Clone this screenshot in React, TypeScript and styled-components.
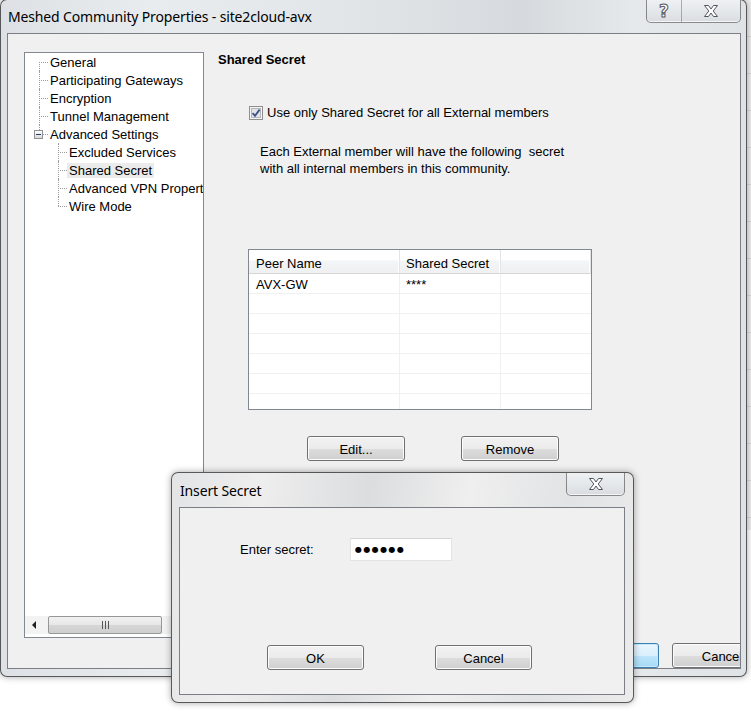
import styled, { createGlobalStyle } from "styled-components";

const GlobalStyle = createGlobalStyle`
  html, body {
    margin: 0;
    padding: 0;
    background: #ffffff;
  }
  body {
    font-family: "Liberation Sans", Arial, sans-serif;
    font-size: 13px;
    color: #000000;
  }
`;

const Desktop = styled.div`
  position: relative;
  width: 751px;
  height: 711px;
  overflow: hidden;
  background: #ffffff;
`;

const BehindStrip = styled.div`
  position: absolute;
  right: 0;
  top: 0;
  width: 14px;
  height: 530px;
  background: repeating-linear-gradient(180deg, #efefef 0 36px, #d8d8d8 36px 37px);
`;

const Window = styled.div<{ $left: number; $top: number; $width: number; $height: number; $glass: string }>`
  position: absolute;
  left: ${(p) => p.$left}px;
  top: ${(p) => p.$top}px;
  width: ${(p) => p.$width}px;
  height: ${(p) => p.$height}px;
  box-sizing: border-box;
  border: 1px solid rgba(40, 40, 40, 0.75);
  border-radius: 7px;
  background: ${(p) => p.$glass};
  box-shadow: 0 0 7px rgba(0, 0, 0, 0.35);
  display: flex;
  flex-direction: column;
`;

const TitleBar = styled.div<{ $height: number; $gap: number }>`
  height: ${(p) => p.$height}px;
  flex-shrink: 0;
  display: flex;
  align-items: flex-start;
  padding-left: ${(p) => p.$gap}px;
`;

const TitleText = styled.div<{ $top: number }>`
  padding-top: ${(p) => p.$top}px;
  font-family: "Noto Sans", "Open Sans", sans-serif;
  font-size: 14px;
  line-height: 18px;
  color: #000000;
  letter-spacing: -0.15px;
`;

const CaptionGroup = styled.div<{ $right: number }>`
  margin-left: auto;
  margin-right: ${(p) => p.$right}px;
  display: flex;
  border: 1px solid rgba(70, 70, 70, 0.6);
  border-top: none;
  border-radius: 0 0 5px 5px;
  overflow: hidden;
  background: linear-gradient(180deg, #eef0f2 0%, #e4e7ea 55%, #d8dce0 100%);
  box-shadow: inset 0 -1px 0 rgba(255, 255, 255, 0.7);
`;

const CaptionButton = styled.div<{ $width: number }>`
  width: ${(p) => p.$width}px;
  height: 22px;
  display: flex;
  align-items: center;
  justify-content: center;
  & + & {
    border-left: 1px solid rgba(90, 90, 90, 0.45);
  }
`;

const HelpGlyph = styled.span`
  font-family: "DejaVu Sans", sans-serif;
  font-weight: bold;
  font-size: 17px;
  line-height: 17px;
  color: #ffffff;
  -webkit-text-stroke: 1px #4f5560;
`;

const Client = styled.div<{ $margins: string }>`
  margin: ${(p) => p.$margins};
  flex: 1;
  border: 1px solid #7b7f85;
  background: #f0f0f0;
  overflow: hidden;
  display: flex;
  flex-direction: column;
`;

const BodyRow = styled.div`
  display: flex;
  padding: 18px 0 0 16px;
`;

const TreeBox = styled.div`
  width: 180px;
  height: 586px;
  flex-shrink: 0;
  box-sizing: border-box;
  border: 1px solid #828790;
  background: #ffffff;
  overflow: hidden;
  display: flex;
  flex-direction: column;
`;

const TreeRow = styled.div<{ $level: number }>`
  position: relative;
  height: 18px;
  box-sizing: border-box;
  padding-top: 2px;
  display: flex;
  align-items: flex-start;
  padding-left: ${(p) => 23 + p.$level * 19}px;
  white-space: nowrap;
`;

const TreeLabel = styled.span<{ $selected?: boolean }>`
  padding: 0 2px;
  line-height: 15px;
  background: ${(p) => (p.$selected ? "#ebebeb" : "transparent")};
`;

const VLine = styled.span<{ $level: number; $up: boolean; $down: boolean }>`
  position: absolute;
  left: ${(p) => 14 + p.$level * 19}px;
  top: ${(p) => (p.$up ? 0 : 9)}px;
  bottom: ${(p) => (p.$down ? 0 : 9)}px;
  border-left: 1px dotted #9c9c9c;
`;

const HLine = styled.span<{ $level: number }>`
  position: absolute;
  left: ${(p) => 14 + p.$level * 19}px;
  top: 9px;
  width: 9px;
  border-top: 1px dotted #9c9c9c;
`;

const Expander = styled.span`
  position: absolute;
  left: 9px;
  top: 5px;
  width: 9px;
  height: 9px;
  box-sizing: border-box;
  border: 1px solid #919191;
  background: linear-gradient(180deg, #ffffff, #d9d9d9);
  display: flex;
  align-items: center;
  justify-content: center;
  &::after {
    content: "";
    width: 5px;
    height: 1px;
    background: #233d6b;
  }
`;

const HScroll = styled.div`
  margin-top: auto;
  margin-bottom: 3px;
  height: 18px;
  display: flex;
  align-items: stretch;
  background: #f3f3f3;
`;

const ArrowButton = styled.div`
  width: 17px;
  display: flex;
  align-items: center;
  justify-content: center;
  &::after {
    content: "";
    border-top: 4px solid transparent;
    border-bottom: 4px solid transparent;
    border-right: 4px solid #222;
  }
`;

const Thumb = styled.div`
  margin-left: 6px;
  width: 114px;
  box-sizing: border-box;
  border: 1px solid #979797;
  border-radius: 2px;
  background: linear-gradient(180deg, #f1f1f1 0%, #e7e7e7 50%, #d6d6d6 51%, #cfcfcf 100%);
  display: flex;
  align-items: center;
  justify-content: center;
`;

const Grip = styled.span`
  width: 7px;
  height: 8px;
  background: repeating-linear-gradient(90deg, #555 0 1px, transparent 1px 3px);
`;

const Panel = styled.div`
  margin-left: 14px;
  display: flex;
  flex-direction: column;
  align-items: flex-start;
`;

const Heading = styled.div`
  font-weight: bold;
  line-height: 15px;
`;

const CheckRow = styled.label`
  margin: 38px 0 0 31px;
  display: flex;
  align-items: center;
  gap: 4px;
  line-height: 16px;
`;

const Description = styled.div`
  margin: 22px 0 0 42px;
  line-height: 17px;
  white-space: pre;
`;

const Grid = styled.div`
  margin: 72px 0 0 30px;
  width: 344px;
  height: 161px;
  box-sizing: border-box;
  border: 1px solid #828790;
  background: #ffffff;
  overflow: hidden;
  display: grid;
  grid-template-columns: 151px 101px 1fr;
  grid-auto-rows: 20px;
  grid-template-rows: 24px;
`;

const HeadCell = styled.div<{ $pad: number }>`
  padding: 3px 0 0 ${(p) => p.$pad}px;
  display: flex;
  align-items: center;
  background: linear-gradient(180deg, #ffffff 0%, #ffffff 45%, #f4f5f6 46%, #eff0f1 100%);
  border-bottom: 1px solid #d5d5d5;
  border-right: 1px solid #e3e4e6;
  box-shadow: inset -1px 0 0 #ffffff;
  &:last-child {
    border-right: none;
  }
`;

const BodyCell = styled.div<{ $pad: number }>`
  padding: 1px 0 0 ${(p) => p.$pad}px;
  display: flex;
  align-items: center;
  border-bottom: 1px solid #f0f0f0;
  border-right: 1px solid #f0f0f0;
  &:nth-child(3n) {
    border-right: none;
  }
`;

const ButtonRow = styled.div<{ $top: number; $left: number; $gap: number }>`
  margin: ${(p) => p.$top}px 0 0 ${(p) => p.$left}px;
  display: flex;
  gap: ${(p) => p.$gap}px;
`;

const Button = styled.button<{ $width: number; $focused?: boolean }>`
  width: ${(p) => p.$width}px;
  height: 25px;
  flex-shrink: 0;
  padding: 1px 0 0;
  font-family: "Liberation Sans", Arial, sans-serif;
  font-size: 13px;
  color: #000000;
  border: 1px solid ${(p) => (p.$focused ? "#3c7fb1" : "#707070")};
  border-radius: 3px;
  background: ${(p) =>
    p.$focused
      ? "linear-gradient(180deg, #eaf6fd 0%, #d9f0fc 50%, #bee6fd 51%, #a7d9f5 100%)"
      : "linear-gradient(180deg, #f2f2f2 0%, #ebebeb 50%, #dddddd 51%, #cfcfcf 100%)"};
  box-shadow: inset 0 0 0 1px ${(p) => (p.$focused ? "#c6eafc" : "#fcfcfc")};
`;

const Footer = styled.div`
  margin: 5px -32px 0 0;
  display: flex;
  justify-content: flex-end;
  gap: 13px;
`;

const DialogBody = styled.div`
  padding: 30px 0 0 60px;
  display: flex;
  flex-direction: column;
`;

const FieldRow = styled.div`
  display: flex;
  align-items: center;
`;

const FieldLabel = styled.span`
  width: 110px;
`;

const SecretBox = styled.div`
  width: 102px;
  height: 23px;
  box-sizing: border-box;
  border: 1px solid #e3e3e3;
  border-top-color: #d5d5d5;
  background: #ffffff;
  padding-left: 4px;
  display: flex;
  align-items: center;
  font-family: "DejaVu Sans", sans-serif;
  font-size: 8px;
  letter-spacing: 1.4px;
  color: #000000;
`;

function CloseGlyph() {
  return (
    <svg width="16" height="14" viewBox="0 0 16 14">
      <path
        d="M1.5 1.5 H5.5 L8 5 L10.5 1.5 H14.5 L10.2 7 L14.5 12.5 H10.5 L8 9 L5.5 12.5 H1.5 L5.8 7 Z"
        fill="#ffffff"
        stroke="#4f5560"
        strokeWidth="1"
        strokeLinejoin="round"
      />
    </svg>
  );
}

function CheckGlyph() {
  return (
    <svg width="14" height="14" viewBox="0 0 14 14">
      <rect x="0.5" y="0.5" width="13" height="13" fill="#f4f4f4" stroke="#8e8f8f" />
      <rect x="2.5" y="2.5" width="9" height="9" fill="#e2e4e7" stroke="#b4b6b9" />
      <path d="M3.6 7.2 L6 9.8 L10.6 3.6" fill="none" stroke="#3f5488" strokeWidth="1.9" />
    </svg>
  );
}

const mainGlass =
  "linear-gradient(90deg, #dde1e5 0%, #e9ecee 20%, #e3e6e9 45%, #d6dade 70%, #e6e9eb 85%, #dfe3e6 100%)";
const dialogGlass =
  "linear-gradient(100deg, #e3e4e6 0%, #eeeeee 18%, #dcdddf 40%, #efefef 60%, #e2e3e5 80%, #ebebeb 100%)";

const tree = [
  { label: "General", level: 0, up: false, down: true },
  { label: "Participating Gateways", level: 0, up: true, down: true },
  { label: "Encryption", level: 0, up: true, down: true },
  { label: "Tunnel Management", level: 0, up: true, down: true },
  { label: "Advanced Settings", level: 0, up: true, down: false, expander: true },
  { label: "Excluded Services", level: 1, up: true, down: true },
  { label: "Shared Secret", level: 1, up: true, down: true, selected: true },
  { label: "Advanced VPN Properties", level: 1, up: true, down: true },
  { label: "Wire Mode", level: 1, up: true, down: false },
];

const rows = [["AVX-GW", "****", ""], ["", "", ""], ["", "", ""], ["", "", ""], ["", "", ""], ["", "", ""], ["", "", ""]];

function App() {
  return (
    <Desktop>
      <GlobalStyle />
      <BehindStrip />

      <Window $left={0} $top={-1} $width={747} $height={678} $glass={mainGlass}>
        <TitleBar $height={33} $gap={7}>
          <TitleText $top={8}>Meshed Community Properties - site2cloud-avx</TitleText>
          <CaptionGroup $right={5}>
            <CaptionButton $width={34}>
              <HelpGlyph>?</HelpGlyph>
            </CaptionButton>
            <CaptionButton $width={58}>
              <CloseGlyph />
            </CaptionButton>
          </CaptionGroup>
        </TitleBar>
        <Client $margins="0 5px 7px 6px">
          <BodyRow>
            <TreeBox>
              {tree.map((item) => (
                <TreeRow key={item.label} $level={item.level}>
                  <VLine $level={item.level} $up={item.up} $down={item.down} />
                  <HLine $level={item.level} />
                  {item.expander && <Expander />}
                  <TreeLabel $selected={item.selected}>{item.label}</TreeLabel>
                </TreeRow>
              ))}
              <HScroll>
                <ArrowButton />
                <Thumb>
                  <Grip />
                </Thumb>
              </HScroll>
            </TreeBox>
            <Panel>
              <Heading>Shared Secret</Heading>
              <CheckRow>
                <CheckGlyph />
                Use only Shared Secret for all External members
              </CheckRow>
              <Description>
                {"Each External member will have the following  secret\nwith all internal members in this community."}
              </Description>
              <Grid>
                <HeadCell $pad={7}>Peer Name</HeadCell>
                <HeadCell $pad={6}>Shared Secret</HeadCell>
                <HeadCell $pad={6} />
                {rows.map((row, i) =>
                  row.map((cell, j) => (
                    <BodyCell key={`${i}-${j}`} $pad={j === 0 ? 7 : 6}>
                      {cell}
                    </BodyCell>
                  ))
                )}
              </Grid>
              <ButtonRow $top={26} $left={89} $gap={56}>
                <Button $width={98}>Edit...</Button>
                <Button $width={98}>Remove</Button>
              </ButtonRow>
            </Panel>
          </BodyRow>
          <Footer>
            <Button $width={100} $focused>
              OK
            </Button>
            <Button $width={100}>Cancel</Button>
          </Footer>
        </Client>
      </Window>

      <Window $left={171} $top={472} $width={463} $height={231} $glass={dialogGlass}>
        <TitleBar $height={34} $gap={8}>
          <TitleText $top={9}>Insert Secret</TitleText>
          <CaptionGroup $right={8}>
            <CaptionButton $width={57}>
              <CloseGlyph />
            </CaptionButton>
          </CaptionGroup>
        </TitleBar>
        <Client $margins="0 8px 7px 7px">
          <DialogBody>
            <FieldRow>
              <FieldLabel>Enter secret:</FieldLabel>
              <SecretBox>●●●●●●</SecretBox>
            </FieldRow>
            <ButtonRow $top={84} $left={27} $gap={71}>
              <Button $width={97}>OK</Button>
              <Button $width={97}>Cancel</Button>
            </ButtonRow>
          </DialogBody>
        </Client>
      </Window>
    </Desktop>
  );
}

export default App;
